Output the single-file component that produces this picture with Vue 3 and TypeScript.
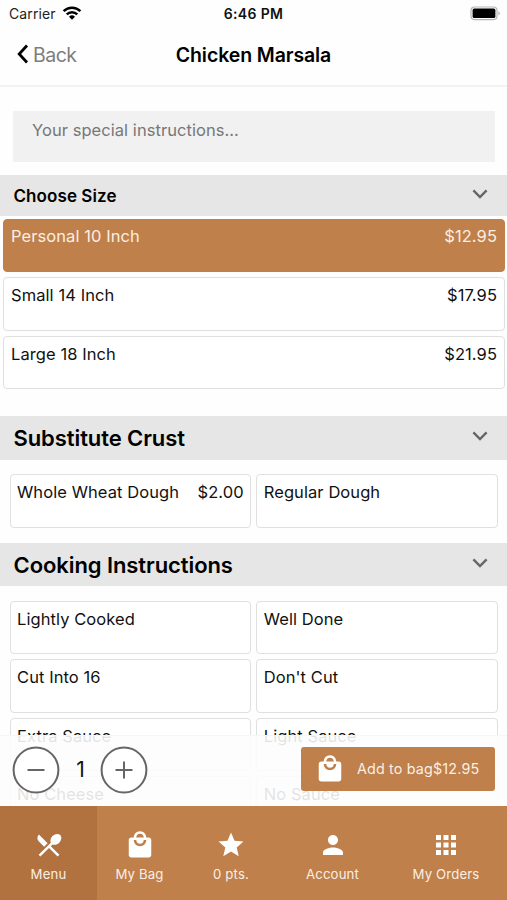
<script setup lang="ts">
interface Option {
  name: string
  price?: string
}

interface Group {
  title: string
  options: Option[]
}

interface Tab {
  label: string
  icon: string
}

const bagIcon =
  'M19 6h-2c0-2.76-2.24-5-5-5S7 3.24 7 6H5c-1.1 0-1.99.9-1.99 2L3 20c0 1.1.9 2 2 2h14c1.1 0 2-.9 2-2V8c0-1.1-.9-2-2-2zm-7-3c1.66 0 3 1.34 3 3H9c0-1.66 1.34-3 3-3zm0 10c-2.76 0-5-2.24-5-5h2c0 1.66 1.34 3 3 3s3-1.34 3-3h2c0 2.76-2.24 5-5 5z'

const sizes: Option[] = [
  { name: 'Personal 10 Inch', price: '$12.95' },
  { name: 'Small 14 Inch', price: '$17.95' },
  { name: 'Large 18 Inch', price: '$21.95' },
]

const groups: Group[] = [
  {
    title: 'Substitute Crust',
    options: [{ name: 'Whole Wheat Dough', price: '$2.00' }, { name: 'Regular Dough' }],
  },
  {
    title: 'Cooking Instructions',
    options: [
      { name: 'Lightly Cooked' },
      { name: 'Well Done' },
      { name: 'Cut Into 16' },
      { name: "Don't Cut" },
      { name: 'Extra Sauce' },
      { name: 'Light Sauce' },
      { name: 'No Cheese' },
      { name: 'No Sauce' },
    ],
  },
]

const tabs: Tab[] = [
  {
    label: 'Menu',
    icon: 'M8.1 13.34l2.83-2.83L3.91 3.5c-1.56 1.56-1.56 4.09 0 5.66l4.19 4.18zm6.78-1.81c1.53.71 3.68.21 5.27-1.38 1.91-1.91 2.28-4.65.81-6.12-1.46-1.46-4.2-1.1-6.12.81-1.59 1.59-2.09 3.74-1.38 5.27L3.7 19.87l1.41 1.41L12 14.41l6.88 6.88 1.41-1.41L13.41 13l1.47-1.47z',
  },
  { label: 'My Bag', icon: bagIcon },
  {
    label: '0 pts.',
    icon: 'M12 17.27L18.18 21l-1.64-7.03L22 9.24l-7.19-.61L12 2 9.19 8.63 2 9.24l5.46 4.73L5.82 21z',
  },
  {
    label: 'Account',
    icon: 'M12 12c2.21 0 4-1.79 4-4s-1.79-4-4-4-4 1.79-4 4 1.79 4 4 4zm0 2c-2.67 0-8 1.34-8 4v2h16v-2c0-2.66-5.33-4-8-4z',
  },
  {
    label: 'My Orders',
    icon: 'M4 8h4V4H4v4zm6 12h4v-4h-4v4zm-6 0h4v-4H4v4zm0-6h4v-4H4v4zm6 0h4v-4h-4v4zm6-10v4h4V4h-4zm-6 4h4V4h-4v4zm6 6h4v-4h-4v4zm0 6h4v-4h-4v4z',
  },
]
</script>

<template>
  <div class="screen">
    <header class="status">
      <div class="carrier">
        <span>Carrier</span>
        <svg class="wifi" viewBox="0 0 20 14">
          <path d="M1.6 5.1a12 12 0 0 1 16.8 0" />
          <path d="M4.7 8.3a7.6 7.6 0 0 1 10.6 0" />
          <path class="dot" d="M10 13.8L7 10.7a4.3 4.3 0 0 1 6 0z" />
        </svg>
      </div>
      <span class="time">6:46 PM</span>
      <svg class="battery" viewBox="0 0 31 15">
        <rect class="shell" x="1" y="1" width="26" height="12.6" rx="3.5" />
        <rect x="2.6" y="2.6" width="22.8" height="9.4" rx="1.6" />
        <path class="cap" d="M28.4 5.2q3 2.1 0 4.2z" />
      </svg>
    </header>

    <nav class="nav">
      <div class="back">
        <svg viewBox="0 0 12 20"><path d="M10 1.5L2.2 10l7.8 8.5" /></svg>
        <span>Back</span>
      </div>
      <h1>Chicken Marsala</h1>
    </nav>

    <main class="content">
      <div class="notes">Your special instructions...</div>

      <section>
        <div class="band small">
          <h2>Choose Size</h2>
          <svg class="chevron" viewBox="0 0 16 10"><path d="M1.4 1.4L8 8l6.6-6.6" /></svg>
        </div>
        <div class="sizes">
          <div v-for="(s, i) in sizes" :key="s.name" class="card" :class="{ selected: i === 0 }">
            <span>{{ s.name }}</span>
            <span class="price">{{ s.price }}</span>
          </div>
        </div>
      </section>

      <section v-for="g in groups" :key="g.title">
        <div class="band">
          <h2>{{ g.title }}</h2>
          <svg class="chevron" viewBox="0 0 16 10"><path d="M1.4 1.4L8 8l6.6-6.6" /></svg>
        </div>
        <div class="options">
          <div v-for="o in g.options" :key="o.name" class="card">
            <span>{{ o.name }}</span>
            <span v-if="o.price" class="price">{{ o.price }}</span>
          </div>
        </div>
      </section>
    </main>

    <footer class="bottom">
      <div class="order">
        <div class="stepper">
          <svg viewBox="0 0 48 48"><circle cx="24" cy="24" r="22.4" /><path d="M15.5 24h17" /></svg>
          <span>1</span>
          <svg viewBox="0 0 48 48"><circle cx="24" cy="24" r="22.4" /><path d="M15.5 24h17M24 15.5v17" /></svg>
        </div>
        <div class="add">
          <svg viewBox="0 0 24 24"><path :d="bagIcon" /></svg>
          <span>Add to bag$12.95</span>
        </div>
      </div>
      <div class="tabs">
        <div v-for="(t, i) in tabs" :key="t.label" class="tab" :class="{ active: i === 0 }">
          <svg viewBox="0 0 24 24"><path :d="t.icon" /></svg>
          <span>{{ t.label }}</span>
        </div>
      </div>
    </footer>
  </div>
</template>

<style>
body {
  background: #fff;
}
</style>

<style scoped>
.screen {
  position: relative;
  display: flex;
  flex-direction: column;
  height: 900px;
  overflow: hidden;
  background: #fefefe;
  color: #111;
  font-family: Inter, 'Liberation Sans', sans-serif;
}
svg {
  display: block;
  flex: none;
}
h1,
h2 {
  margin: 0;
  font-weight: 600;
  color: #000;
}
.status {
  display: grid;
  grid-template-columns: 1fr auto 1fr;
  align-items: center;
  box-sizing: border-box;
  height: 28px;
  flex: none;
  padding: 0 6px 2px 9px;
  font-size: 14px;
}
.carrier {
  display: flex;
  align-items: center;
  gap: 6px;
  color: #222;
  letter-spacing: 0.1px;
}
.wifi {
  width: 20px;
  height: 14px;
  margin-top: -1px;
  fill: none;
  stroke: #000;
  stroke-width: 2.5;
}
.wifi .dot {
  fill: #000;
  stroke: none;
}
.time {
  font-weight: 600;
  letter-spacing: 0.35px;
  margin-left: -3px;
}
.battery {
  justify-self: end;
  width: 31px;
  height: 15px;
}
.battery .shell {
  fill: #fff;
  stroke: #b5b5b5;
  stroke-width: 1.2;
}
.battery .cap {
  fill: #b5b5b5;
}
.nav {
  display: grid;
  grid-template-columns: 1fr auto 1fr;
  align-items: center;
  box-sizing: border-box;
  height: 59px;
  flex: none;
  padding: 0 17px 4px;
  border-bottom: 2px solid #f2f2f2;
}
.nav h1 {
  font-size: 19.5px;
  line-height: 26px;
  letter-spacing: -0.1px;
}
.back {
  display: flex;
  align-items: center;
  gap: 4px;
  font-size: 19.5px;
  letter-spacing: -0.5px;
  color: #7d7d7d;
}
.back svg {
  width: 12px;
  height: 20px;
  margin-top: -2px;
  fill: none;
  stroke: #000;
  stroke-width: 2.8;
}
.content {
  flex: 1;
  min-height: 0;
}
.notes {
  box-sizing: border-box;
  height: 51px;
  margin: 24px 12px 12.5px 13px;
  padding: 9px 19px;
  background: #f1f1f1;
  color: #777;
  font-size: 16.5px;
  line-height: 21px;
  letter-spacing: 0.05px;
}
.band {
  display: flex;
  align-items: center;
  justify-content: space-between;
  box-sizing: border-box;
  height: 43.5px;
  padding: 1px 19px 0 13.5px;
  background: #e6e6e6;
}
.band h2 {
  font-size: 22px;
  line-height: 28px;
  letter-spacing: -0.08px;
}
.band.small {
  height: 41.5px;
}
.band.small h2 {
  font-size: 17px;
  letter-spacing: 0.08px;
}
.chevron {
  width: 16px;
  height: 10px;
  margin-top: -4.5px;
  fill: none;
  stroke: #666;
  stroke-width: 2.4;
}
.sizes {
  display: grid;
  gap: 5px;
  padding: 2.5px 2.5px 27px 3px;
}
.options {
  display: grid;
  grid-template-columns: 1fr 1fr;
  gap: 5px;
  padding: 14.5px 9px 15px 9.5px;
}
.card {
  display: flex;
  justify-content: space-between;
  box-sizing: border-box;
  height: 53.5px;
  padding: 7px 6.5px;
  border: 1.5px solid #e0e0e0;
  border-radius: 4px;
  background: #fff;
  font-size: 16.5px;
  line-height: 20px;
  letter-spacing: 0.08px;
  white-space: nowrap;
}
.sizes .card {
  padding-left: 7px;
}
.card.selected {
  padding-top: 6.3px;
  border-color: #bf804b;
  background: #bf804b;
  color: #fbeee3;
}
.bottom {
  position: absolute;
  right: 0;
  bottom: 0;
  left: 0;
}
.order {
  display: flex;
  align-items: center;
  justify-content: space-between;
  box-sizing: border-box;
  height: 71px;
  padding: 0 12px 2px;
  border-top: 1px solid rgba(245, 245, 245, 0.9);
  background: rgba(253, 253, 253, 0.89);
}
.stepper {
  display: flex;
  align-items: center;
  font-size: 21px;
}
.stepper span {
  width: 40px;
  padding-left: 1px;
  box-sizing: border-box;
  text-align: center;
}
.stepper svg {
  width: 48px;
  height: 48px;
  fill: #fff;
  stroke: #666;
  stroke-width: 2;
}
.add {
  display: flex;
  align-items: center;
  box-sizing: border-box;
  width: 194px;
  height: 44px;
  margin-top: -2px;
  padding-left: 14px;
  gap: 12px;
  border-radius: 3px;
  background: #bf804b;
  color: #fbeee3;
  font-size: 14.3px;
  letter-spacing: 0.18px;
  white-space: nowrap;
}
.add svg,
.tab svg {
  width: 30px;
  height: 30px;
  fill: #fff;
}
.tabs {
  display: grid;
  grid-template-columns: 97px 85px 98px 105px 1fr;
  height: 94.5px;
  background: #bf804b;
}
.tab {
  display: flex;
  flex-direction: column;
  align-items: center;
  padding-top: 24px;
  color: #fbeee3;
  font-size: 13.2px;
  letter-spacing: 0.15px;
}
.tab span {
  margin-top: 6px;
  line-height: 16px;
}
.tab.active {
  background: #b27240;
}
</style>
